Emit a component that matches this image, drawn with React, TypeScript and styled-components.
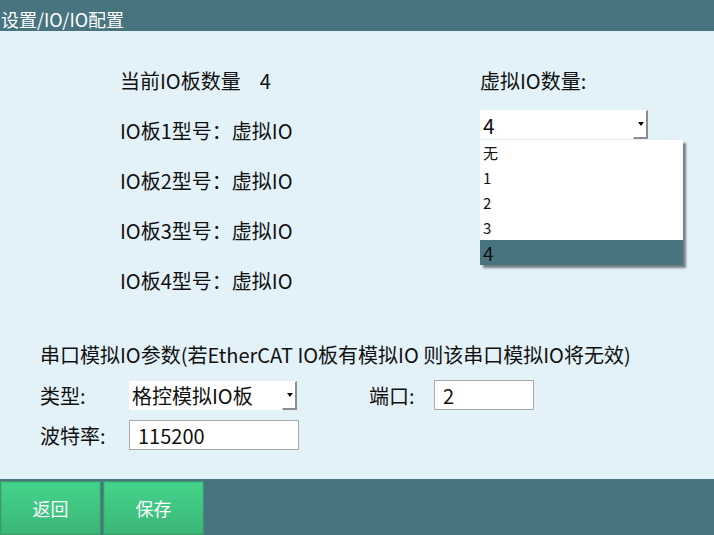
import * as React from 'react';
import styled, { createGlobalStyle } from 'styled-components';

const Colors = {
    BAR: '#48747f',
    PAGE: '#e3f2f8',
    TEXT: '#111111',
    WHITE: '#ffffff',
    GREEN_TOP: '#45d48c',
    GREEN_BOTTOM: '#3bb677',
    FIELD_BORDER: '#a9a9a9',
};

const FONT = `"Noto Sans CJK SC", "Noto Sans", sans-serif`;

const GlobalStyle = createGlobalStyle`
    html, body {
        margin: 0;
        padding: 0;
        background: ${Colors.PAGE};
    }
    body {
        font-family: ${FONT};
        color: ${Colors.TEXT};
    }
`;

const boards = [1, 2, 3, 4];
const options = ['无', '1', '2', '3', '4'];

const App: React.FC = () => {
    return (
        <>
            <GlobalStyle />
            <Page>
                <Header>设置/IO/IO配置</Header>
                <Main>
                    <TopSection>
                        <BoardColumn>
                            <InfoRow>
                                当前IO板数量<Count>4</Count>
                            </InfoRow>
                            {boards.map((n) => (
                                <InfoRow key={n}>IO板{n}型号：虚拟IO</InfoRow>
                            ))}
                        </BoardColumn>
                        <VirtualColumn>
                            <InfoRow>虚拟IO数量:</InfoRow>
                            <SelectWrap>
                                <Select $width={168}>
                                    <SelectValue $size={21}>4</SelectValue>
                                    <ArrowButton>
                                        <Arrow />
                                    </ArrowButton>
                                </Select>
                                <OptionList>
                                    {options.map((o) => (
                                        <OptionItem key={o} $active={o === '4'}>
                                            {o}
                                        </OptionItem>
                                    ))}
                                </OptionList>
                            </SelectWrap>
                        </VirtualColumn>
                    </TopSection>
                    <SerialSection>
                        <SectionTitle>串口模拟IO参数(若EtherCAT IO板有模拟IO 则该串口模拟IO将无效)</SectionTitle>
                        <FieldRow>
                            <FieldLabel>类型:</FieldLabel>
                            <Select $width={168}>
                                <SelectValue $size={20}>格控模拟IO板</SelectValue>
                                <ArrowButton>
                                    <Arrow />
                                </ArrowButton>
                            </Select>
                            <PortLabel>端口:</PortLabel>
                            <TextField $width={100}>2</TextField>
                        </FieldRow>
                        <FieldRow>
                            <FieldLabel>波特率:</FieldLabel>
                            <TextField $width={170}>115200</TextField>
                        </FieldRow>
                    </SerialSection>
                </Main>
                <Footer>
                    <FooterButton>返回</FooterButton>
                    <FooterButton>保存</FooterButton>
                </Footer>
            </Page>
        </>
    );
};

const Page = styled.div`
    width: 714px;
    height: 535px;
    display: flex;
    flex-direction: column;
    background: ${Colors.PAGE};
    overflow: hidden;
`;
const Header = styled.div`
    height: 31px;
    box-sizing: border-box;
    padding: 7px 0 0 1px;
    background: ${Colors.BAR};
    color: ${Colors.WHITE};
    font-size: 18px;
    line-height: 24px;
`;
const Main = styled.div`
    flex: 1;
    display: flex;
    flex-direction: column;
    padding-top: 24px;
`;
const TopSection = styled.div`
    display: flex;
`;
const BoardColumn = styled.div`
    margin-left: 120px;
    width: 360px;
    display: flex;
    flex-direction: column;
`;
const VirtualColumn = styled.div`
    display: flex;
    flex-direction: column;
`;
const InfoRow = styled.div`
    height: 50px;
    display: flex;
    align-items: center;
    font-size: 20px;
`;
const Count = styled.span`
    margin-left: 19px;
`;
const SelectWrap = styled.div`
    position: relative;
    margin-top: 5px;
`;
const Select = styled.div<{ $width: number }>`
    width: ${(p) => p.$width}px;
    height: 29px;
    box-sizing: border-box;
    display: flex;
    align-items: stretch;
    background: ${Colors.WHITE};
`;
const SelectValue = styled.div<{ $size: number }>`
    flex: 1;
    display: flex;
    align-items: center;
    padding-left: 3px;
    font-size: ${(p) => p.$size}px;
    white-space: nowrap;
`;
const ArrowButton = styled.div`
    width: 15px;
    box-sizing: border-box;
    display: flex;
    align-items: center;
    justify-content: center;
    border-right: 2px solid #8d8d8d;
    border-bottom: 2px solid #8d8d8d;
    border-top: 1px solid ${Colors.WHITE};
    border-left: 1px solid ${Colors.WHITE};
    background: ${Colors.WHITE};
`;
const Arrow = styled.div`
    width: 0;
    height: 0;
    border-left: 3.5px solid transparent;
    border-right: 3.5px solid transparent;
    border-top: 4px solid #000;
    margin-left: 1px;
`;
const OptionList = styled.div`
    position: absolute;
    top: 30px;
    left: 0;
    width: 203px;
    background: ${Colors.WHITE};
    box-shadow: 3px 3px 2px rgba(70, 80, 85, 0.7);
    z-index: 2;
`;
const OptionItem = styled.div<{ $active: boolean }>`
    height: 25px;
    display: flex;
    align-items: center;
    padding-left: 3px;
    font-size: ${(p) => (p.$active ? 19 : 15)}px;
    background: ${(p) => (p.$active ? Colors.BAR : 'transparent')};
    color: #111;
`;
const SerialSection = styled.div`
    display: flex;
    flex-direction: column;
    gap: 10px;
    padding-left: 40px;
    margin-top: 35px;
`;
const SectionTitle = styled.div`
    height: 30px;
    line-height: 30px;
    font-size: 20px;
    white-space: nowrap;
`;
const FieldRow = styled.div`
    height: 30px;
    display: flex;
    align-items: center;
`;
const FieldLabel = styled.div`
    width: 89px;
    font-size: 20px;
`;
const PortLabel = styled.div`
    margin-left: 72px;
    width: 65px;
    font-size: 20px;
`;
const TextField = styled.div<{ $width: number }>`
    width: ${(p) => p.$width}px;
    height: 30px;
    box-sizing: border-box;
    display: flex;
    align-items: center;
    padding-left: 8px;
    border: 1px solid ${Colors.FIELD_BORDER};
    background: ${Colors.WHITE};
    font-size: 20px;
`;
const Footer = styled.div`
    height: 56px;
    box-sizing: border-box;
    padding-top: 2px;
    display: flex;
    gap: 2px;
    background: ${Colors.BAR};
`;
const FooterButton = styled.div`
    width: 101px;
    box-sizing: border-box;
    display: flex;
    align-items: center;
    justify-content: center;
    border: 1px solid #3b9a6a;
    box-shadow: inset 0 0 2px #38a46c;
    background: linear-gradient(${Colors.GREEN_TOP}, ${Colors.GREEN_BOTTOM});
    color: ${Colors.WHITE};
    font-size: 18px;
`;

export default App;
